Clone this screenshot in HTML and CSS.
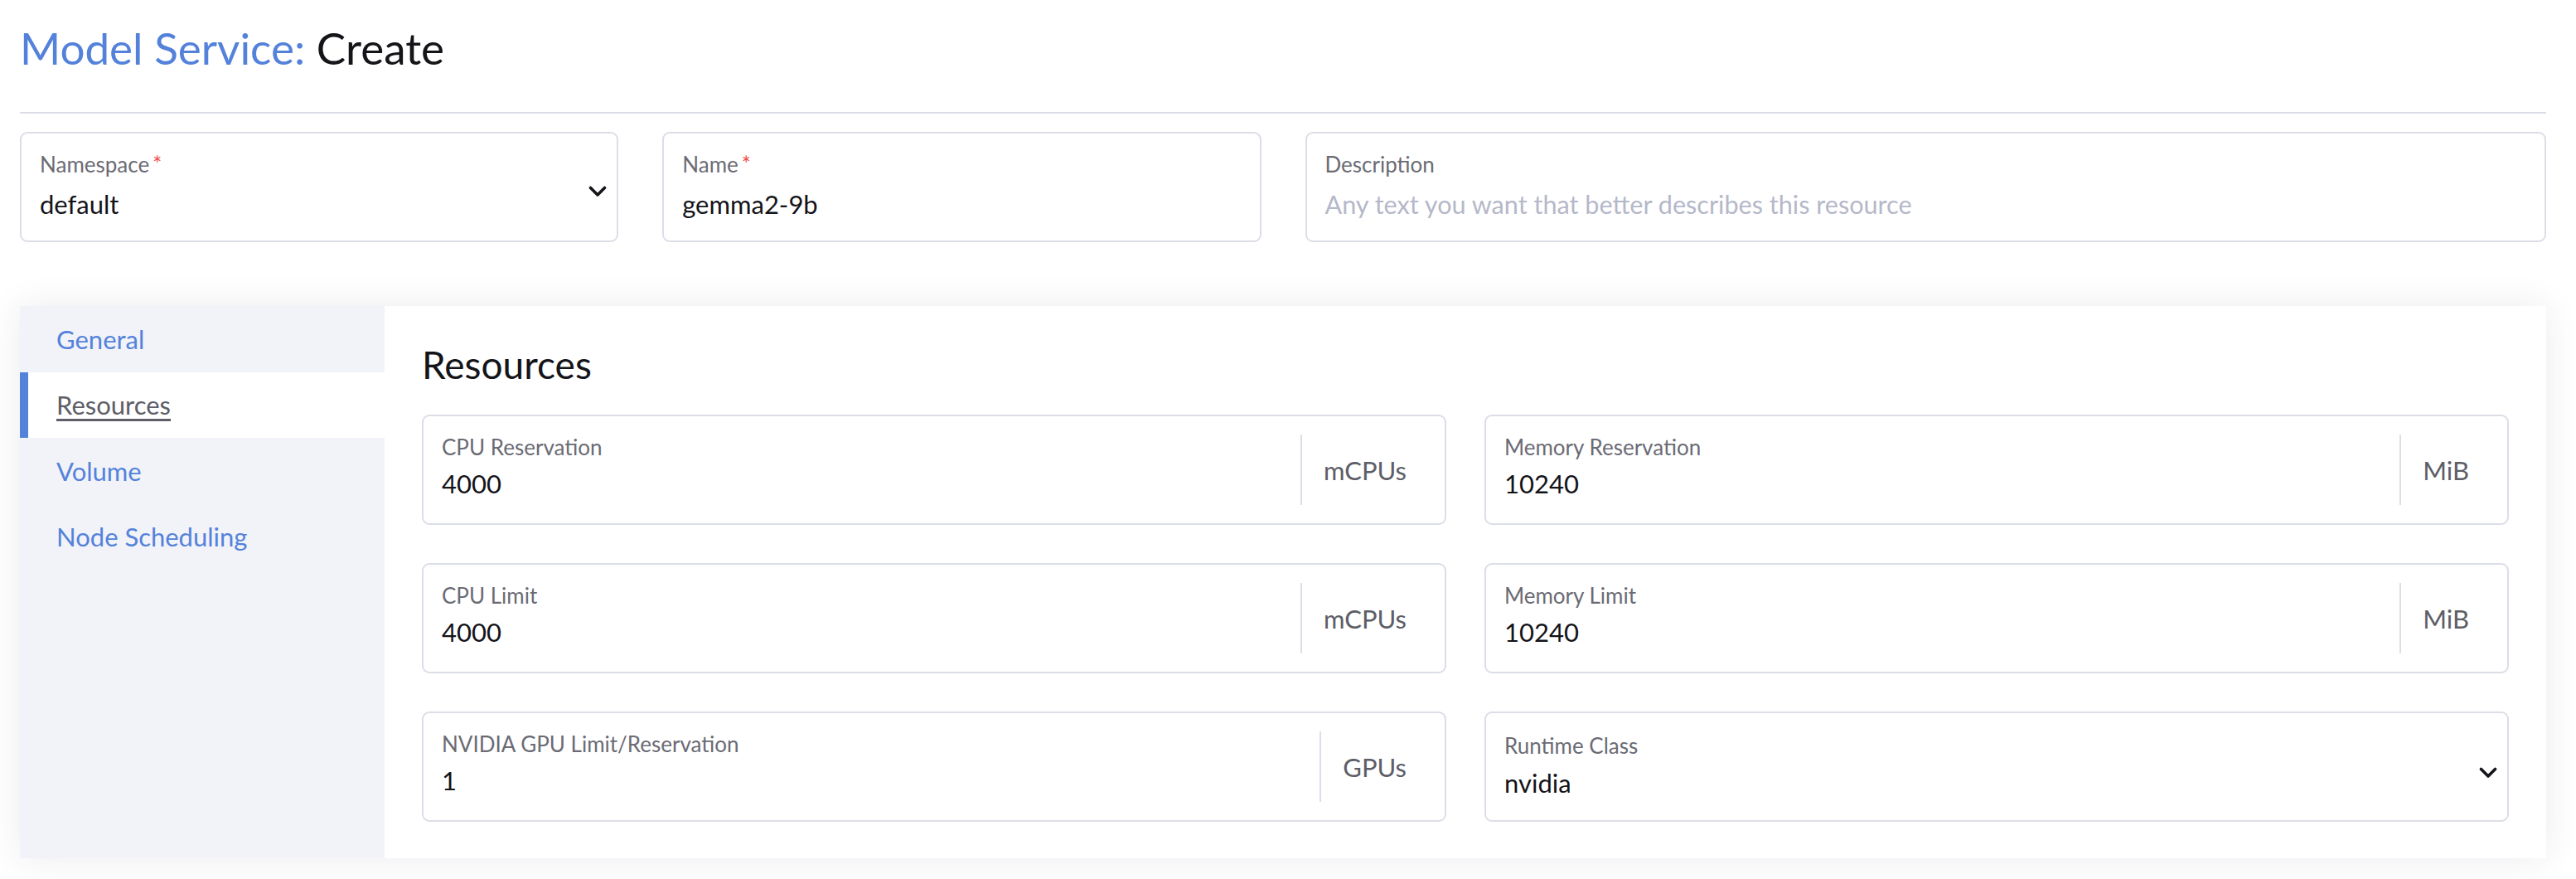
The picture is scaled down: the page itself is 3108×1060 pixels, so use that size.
FILE: index.html
```html
<!DOCTYPE html>
<html>
<head>
<meta charset="utf-8">
<title>Model Service: Create</title>
<link rel="stylesheet" href="styles.css">
</head>
<body>
<div class="page">
  <h1 class="title"><span class="crumb">Model Service:</span> Create</h1>
  <hr class="divider">

  <div class="top-row">
    <div class="field field-select span-3">
      <div class="field-main">
        <label class="field-label">Namespace<span class="req">*</span></label>
        <div class="field-value">default</div>
      </div>
      <svg class="chevron" viewBox="0 0 22 14" width="22" height="14" aria-hidden="true"><polyline points="2.5,2.5 11,11 19.5,2.5"/></svg>
    </div>
    <div class="field span-3">
      <div class="field-main">
        <label class="field-label">Name<span class="req">*</span></label>
        <div class="field-value">gemma2-9b</div>
      </div>
    </div>
    <div class="field span-6">
      <div class="field-main">
        <label class="field-label">Description</label>
        <div class="field-value placeholder">Any text you want that better describes this resource</div>
      </div>
    </div>
  </div>

  <div class="panel">
    <ul class="tabs">
      <li class="tab"><span>General</span></li>
      <li class="tab active"><span>Resources</span></li>
      <li class="tab"><span>Volume</span></li>
      <li class="tab"><span>Node Scheduling</span></li>
    </ul>
    <div class="tab-body">
      <h2 class="section-title">Resources</h2>
      <div class="res-grid">
        <div class="field">
          <div class="field-main">
            <label class="field-label">CPU Reservation</label>
            <div class="field-value">4000</div>
          </div>
          <div class="addon">mCPUs</div>
        </div>
        <div class="field">
          <div class="field-main">
            <label class="field-label">Memory Reservation</label>
            <div class="field-value">10240</div>
          </div>
          <div class="addon">MiB</div>
        </div>
        <div class="field">
          <div class="field-main">
            <label class="field-label">CPU Limit</label>
            <div class="field-value">4000</div>
          </div>
          <div class="addon">mCPUs</div>
        </div>
        <div class="field">
          <div class="field-main">
            <label class="field-label">Memory Limit</label>
            <div class="field-value">10240</div>
          </div>
          <div class="addon">MiB</div>
        </div>
        <div class="field">
          <div class="field-main">
            <label class="field-label">NVIDIA GPU Limit/Reservation</label>
            <div class="field-value">1</div>
          </div>
          <div class="addon">GPUs</div>
        </div>
        <div class="field field-select runtime">
          <div class="field-main">
            <label class="field-label">Runtime Class</label>
            <div class="field-value">nvidia</div>
          </div>
          <svg class="chevron" viewBox="0 0 22 14" width="22" height="14" aria-hidden="true"><polyline points="2.5,2.5 11,11 19.5,2.5"/></svg>
        </div>
      </div>
    </div>
  </div>
</div>
</body>
</html>
```

FILE: styles.css
```css
* { box-sizing: border-box; }

html, body {
  margin: 0;
  background: #ffffff;
}

body {
  font-family: Lato, "Noto Sans", "Liberation Sans", sans-serif;
  color: #141419;
}

.page {
  padding: 0 36px 25px 24px;
}

.title {
  margin: 0;
  padding-top: 26px;
  font-size: 53px;
  line-height: 64px;
  font-weight: 400;
  color: #141419;
}

.crumb {
  color: #5482db;
}

.divider {
  border: 0;
  height: 2px;
  background: #dcdee7;
  margin: 45px 0 22px;
}

.top-row {
  display: grid;
  grid-template-columns: repeat(12, 1fr);
  column-gap: 53px;
}

.span-3 { grid-column: span 3; }
.span-6 { grid-column: span 6; }

.field {
  display: flex;
  align-items: stretch;
  height: 133px;
  border: 2px solid #dcdee7;
  border-radius: 9px;
  padding: 22px;
  background: #ffffff;
}

.field-main {
  flex: 1;
  min-width: 0;
}

.field-label {
  display: block;
  font-size: 26px;
  line-height: 31px;
  color: #6b6b74;
  white-space: nowrap;
}

.req {
  color: #f04a4a;
  margin-left: 4px;
}

.field-value {
  margin-top: 10px;
  font-size: 31px;
  line-height: 37px;
  color: #141419;
  white-space: nowrap;
}

.top-row .field-value {
  margin-top: 14px;
}

.field-value.placeholder {
  color: #b5b8c9;
  font-size: 30.6px;
}

.addon {
  display: flex;
  align-items: center;
  border-left: 2px solid #dcdee7;
  padding: 0 24px 0 26px;
  font-size: 31px;
  color: #5d5e67;
}

.field-select {
  padding-right: 12px;
}

.chevron {
  align-self: center;
  margin-top: 10px;
  fill: none;
  stroke: #141419;
  stroke-width: 3.6;
  stroke-linecap: round;
  stroke-linejoin: round;
  flex: none;
}

.runtime .chevron {
  margin-top: 14px;
}

.runtime .field-label {
  margin-top: 2px;
}

.runtime .field-value {
  margin-top: 11px;
}

.panel {
  display: flex;
  margin-top: 77px;
  box-shadow: 0 0 40px rgba(40, 44, 80, 0.09);
}

.tabs {
  list-style: none;
  margin: 0;
  padding: 0;
  width: 440px;
  flex: none;
  background: #f2f3f8;
}

.tab {
  display: flex;
  align-items: center;
  height: 79.5px;
  padding-left: 44px;
  font-size: 31px;
  color: #5482db;
}

.tab.active {
  background: #ffffff;
  border-left: 10px solid #5482db;
  padding-left: 34px;
  color: #5d5e67;
}

.tab.active span {
  text-decoration: underline;
  text-decoration-thickness: 3px;
  text-underline-offset: 5px;
}

.tab-body {
  flex: 1;
  background: #ffffff;
  padding: 44px 45px 44px 45px;
}

.section-title {
  margin: 0 0 33px;
  font-size: 46px;
  line-height: 54px;
  font-weight: 400;
  color: #141419;
}

.res-grid {
  display: grid;
  grid-template-columns: 1fr 1fr;
  column-gap: 46px;
  row-gap: 46px;
}
```
